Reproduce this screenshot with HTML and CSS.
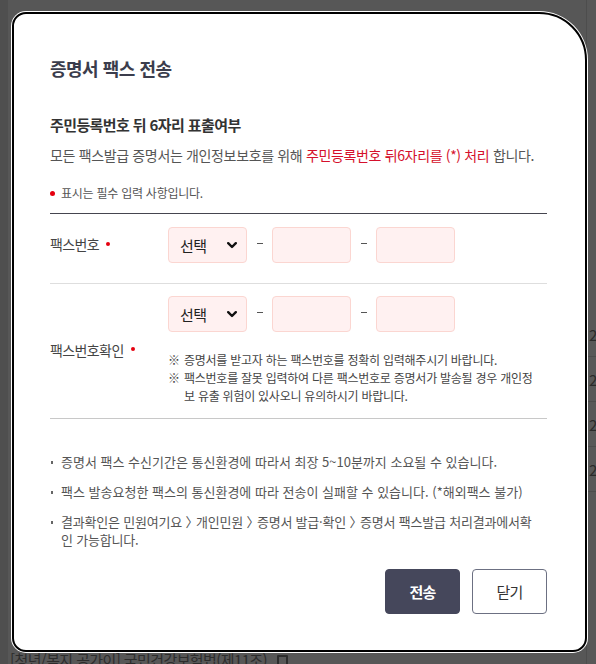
FILE: index.html
```html
<!DOCTYPE html>
<html lang="ko">
<head>
<meta charset="utf-8">
<title>증명서 팩스 전송</title>
<link rel="stylesheet" href="styles.css">
</head>
<body>
<div class="page">
  <div class="bg-left"></div>
  <div class="bg-main">
    <div class="bg-bottom-text">[청년/복지 공가이] 국민건강보험법(제11조) <span class="bg-icon"></span></div>
  </div>
  <div class="bg-right">
    <div class="bg-row">2</div>
    <div class="bg-row">2</div>
    <div class="bg-row">2</div>
    <div class="bg-row">2</div>
  </div>

  <div class="modal" role="dialog" aria-labelledby="modal-title">
    <h1 class="modal-title" id="modal-title">증명서 팩스 전송</h1>
    <h2 class="section-title">주민등록번호 뒤 6자리 표출여부</h2>
    <p class="section-desc">모든 팩스발급 증명서는 개인정보보호를 위해 <em class="accent">주민등록번호 뒤6자리를 (*) 처리</em> 합니다.</p>
    <p class="required-note"><span class="req-dot"></span>표시는 필수 입력 사항입니다.</p>

    <div class="form-table">
      <div class="form-row row-first">
        <div class="form-label">팩스번호<span class="req-mark"></span></div>
        <div class="form-field">
          <div class="phone-group">
            <div class="select-box">선택<svg class="chev" width="10" height="7" viewBox="0 0 10 7"><path d="M1.2 1.2 L5 5 L8.8 1.2" fill="none" stroke="#111" stroke-width="2.4" stroke-linecap="round" stroke-linejoin="round"/></svg></div>
            <span class="dash"></span>
            <div class="text-box"></div>
            <span class="dash"></span>
            <div class="text-box"></div>
          </div>
        </div>
      </div>
      <div class="form-row row-second">
        <div class="form-label">팩스번호확인<span class="req-mark"></span></div>
        <div class="form-field">
          <div class="phone-group">
            <div class="select-box">선택<svg class="chev" width="10" height="7" viewBox="0 0 10 7"><path d="M1.2 1.2 L5 5 L8.8 1.2" fill="none" stroke="#111" stroke-width="2.4" stroke-linecap="round" stroke-linejoin="round"/></svg></div>
            <span class="dash"></span>
            <div class="text-box"></div>
            <span class="dash"></span>
            <div class="text-box"></div>
          </div>
          <ul class="notes">
            <li><span class="note-mark">※</span><span class="note-text">증명서를 받고자 하는 팩스번호를 정확히 입력해주시기 바랍니다.</span></li>
            <li><span class="note-mark">※</span><span class="note-text">팩스번호를 잘못 입력하여 다른 팩스번호로 증명서가 발송될 경우 개인정<br>보 유출 위험이 있사오니 유의하시기 바랍니다.</span></li>
          </ul>
        </div>
      </div>
    </div>

    <ul class="info-list">
      <li>증명서 팩스 수신기간은 통신환경에 따라서 최장 5~10분까지 소요될 수 있습니다.</li>
      <li>팩스 발송요청한 팩스의 통신환경에 따라 전송이 실패할 수 있습니다. (*해외팩스 불가)</li>
      <li class="tight">결과확인은 민원여기요 <span class="arrow">〉</span> 개인민원 <span class="arrow">〉</span> 증명서 발급·확인 <span class="arrow">〉</span> 증명서 팩스발급 처리결과에서확<br>인 가능합니다.</li>
    </ul>

    <div class="actions">
      <button class="btn btn-primary" type="button">전송</button>
      <button class="btn btn-outline" type="button">닫기</button>
    </div>
  </div>
</div>
</body>
</html>
```

FILE: styles.css
```css
* { box-sizing: border-box; }

html, body {
  margin: 0;
  padding: 0;
}

body {
  width: 596px;
  height: 664px;
  overflow: hidden;
  background: #565656;
  font-family: "Noto Sans CJK KR", "Noto Sans", sans-serif;
}

.page {
  position: relative;
  width: 596px;
  height: 664px;
  display: grid;
  grid-template-columns: 8px 1fr 10px;
}

/* dimmed page behind the overlay */
.bg-left {
  background: #4f4f4f;
}

.bg-main {
  display: flex;
  flex-direction: column;
  justify-content: flex-end;
  background: #575757;
}

.bg-bottom-text {
  margin: 0 0 -6px 2px;
  font-size: 15px;
  line-height: 20px;
  color: #2c2c2c;
  letter-spacing: -0.6px;
  white-space: nowrap;
  display: flex;
  align-items: center;
  gap: 10px;
}

.bg-icon {
  width: 11px;
  height: 11px;
  border: 2px solid #2c2c2c;
  border-radius: 1px;
}

.bg-right {
  padding-top: 312px;
  background: #585858;
  border-left: 1px solid #4d4d4d;
}

.bg-row {
  height: 45px;
  border-bottom: 1px solid #4c4c4c;
  font-size: 15px;
  line-height: 45px;
  color: #2a2a2a;
  padding-left: 2px;
  overflow: hidden;
}

/* modal */
.modal {
  position: absolute;
  left: 12px;
  top: 12px;
  width: 575px;
  height: 640px;
  background: #fff;
  border: 2px solid #000;
  border-radius: 14px 48px 14px 14px;
  box-shadow: 0 0 0 1px #fff;
  padding: 42px 38px 0 36px;
  display: flex;
  flex-direction: column;
}

.modal-title {
  margin: 0;
  font-size: 18px;
  line-height: 24px;
  font-weight: 700;
  color: #3b3d4c;
  letter-spacing: -0.5px;
}

.section-title {
  margin: 35px 0 0;
  font-size: 15px;
  line-height: 20px;
  font-weight: 700;
  color: #333;
  letter-spacing: -0.6px;
}

.section-desc {
  margin: 10px 0 0;
  font-size: 14px;
  line-height: 20px;
  color: #555;
  letter-spacing: -0.35px;
  white-space: nowrap;
}

.accent {
  font-style: normal;
  color: #d5102c;
}

.required-note {
  margin: 19px 0 0;
  font-size: 12px;
  line-height: 18px;
  color: #555;
  letter-spacing: -0.25px;
  display: flex;
  align-items: center;
}

.req-dot {
  width: 5px;
  height: 5px;
  border-radius: 50%;
  background: #e5000f;
  margin-right: 6px;
  flex: none;
}

.form-table {
  margin-top: 11px;
  border-top: 1px solid #45454f;
}

.form-row {
  display: flex;
  align-items: center;
}

.row-first {
  padding: 13px 0 20px;
  border-bottom: 1px solid #dedede;
}

.row-second {
  padding: 12px 0 13px;
  border-bottom: 1px solid #c8c8c8;
}

.form-label {
  width: 118px;
  flex: none;
  font-size: 14px;
  line-height: 20px;
  color: #444;
  letter-spacing: -0.6px;
  display: flex;
  align-items: center;
  margin-top: -2px;
}

.req-mark {
  width: 4px;
  height: 4px;
  border-radius: 50%;
  background: #e5000f;
  margin-left: 7px;
  margin-top: -1px;
}

.form-field {
  flex: 1;
}

.phone-group {
  display: flex;
  align-items: center;
}

.select-box,
.text-box {
  width: 79px;
  height: 36px;
  border: 1px solid #fbd6d1;
  background: #fff1f1;
  border-radius: 4px;
  flex: none;
}

.select-box {
  display: flex;
  align-items: center;
  justify-content: space-between;
  padding: 0 9px 0 11px;
  font-size: 15px;
  color: #222;
  letter-spacing: -0.6px;
}

.chev {
  display: block;
}

.dash {
  width: 25px;
  height: 14px;
  flex: none;
  display: flex;
  align-items: center;
  justify-content: center;
  margin-top: -4px;
}

.dash::before {
  content: "";
  width: 6px;
  height: 1px;
  background: #555;
}

.notes {
  list-style: none;
  margin: 19px 0 0;
  padding: 0;
  font-size: 12px;
  line-height: 18px;
  color: #444;
  letter-spacing: -0.25px;
}

.notes li {
  display: flex;
  white-space: nowrap;
}

.note-mark {
  width: 16px;
  flex: none;
  letter-spacing: 0;
}

.info-list {
  list-style: none;
  margin: 34px 0 0;
  padding: 0;
  font-size: 13px;
  line-height: 18px;
  color: #555;
  letter-spacing: 0;
  display: flex;
  flex-direction: column;
  gap: 12px;
}

.info-list li {
  position: relative;
  padding-left: 11px;
  white-space: nowrap;
}

.info-list li::before {
  content: "";
  position: absolute;
  left: 1px;
  top: 8px;
  width: 2px;
  height: 3px;
  background: #666;
}

.info-list .tight {
  letter-spacing: -0.2px;
}

.arrow {
  letter-spacing: -6px;
}

.actions {
  margin-top: 20px;
  display: flex;
  justify-content: flex-end;
  gap: 12px;
}

.btn {
  width: 75px;
  height: 45px;
  border-radius: 4px;
  font-family: "Noto Sans CJK KR", "Noto Sans", sans-serif;
  font-size: 15px;
  letter-spacing: -0.8px;
  cursor: pointer;
}

.btn-primary {
  background: #45475b;
  border: 1px solid #45475b;
  color: #fff;
  font-weight: 700;
}

.btn-outline {
  background: #fff;
  border: 1px solid #6c7082;
  color: #333;
}
```
